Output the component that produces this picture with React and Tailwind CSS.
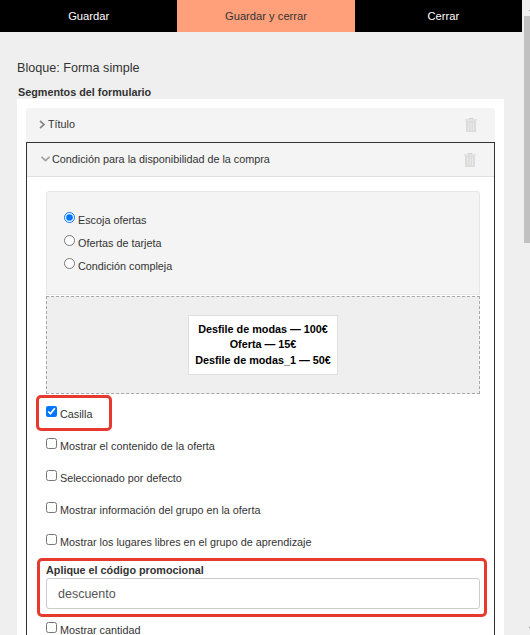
import React from "react";

const TrashIcon = () => (
    <svg viewBox="0 0 12 14" width="12" height="14" className="shrink-0" fill="none">
        <path d="M4 1.5V.5h4v1" stroke="#d2d2d2" />
        <path d="M0 2h12" stroke="#d2d2d2" />
        <path d="M1 3h10v10.5a.5.5 0 0 1-.5.5h-9a.5.5 0 0 1-.5-.5z" fill="#dcdcdc" />
        <path d="M3.5 4.5v8" stroke="#efe6dc" />
        <path d="M6 4.5v8" stroke="#e6efe6" />
        <path d="M8.5 4.5v8" stroke="#e6e8f2" />
    </svg>
);

const Chevron = ({ open }) =>
    open ? (
        <svg viewBox="0 0 9 6" width="9" height="6" fill="none" className="shrink-0">
            <path d="M0.5 0.8L4.5 4.6 8.5 0.8" stroke="#a0a0a0" strokeWidth="1.7" />
        </svg>
    ) : (
        <svg viewBox="0 0 8 9" width="8" height="9" fill="none" className="shrink-0">
            <path d="M1 0.8L5 4.5 1 8.2" stroke="#8a8a8a" strokeWidth="1.8" />
        </svg>
    );

const Check = ({ label, checked }) => (
    <label className="flex items-start h-[32px] text-[10.8px] leading-[14px] text-[#333]">
        <input type="checkbox" defaultChecked={checked} className="w-[11px] h-[11px] m-0 accent-[#0075ff]" />
        <span className="ml-[3px] mt-[1px]">{label}</span>
    </label>
);

const Radio = ({ label, checked }) => (
    <label className="flex items-start h-[23px] text-[10.8px] leading-[14px] text-[#333]">
        <input type="radio" name="cond" defaultChecked={checked} className="w-[11px] h-[11px] m-0 accent-[#0075ff]" />
        <span className="ml-[3px] mt-[1px]">{label}</span>
    </label>
);

const App = () => {
    return (
        <div className="flex h-[635px] w-[530px] overflow-hidden bg-[#efefef] font-['Liberation_Sans',Arial,sans-serif]">
            <div className="w-[524px] shrink-0 overflow-hidden">
                <div className="w-[522px] h-[32px] overflow-hidden">
                    <div className="flex w-[532px] h-[32px] text-[11.2px]">
                        <div className="flex-1 flex items-center justify-center bg-black text-white">Guardar</div>
                        <div className="flex-1 flex items-center justify-center bg-[#ffa07a] text-[#333]">Guardar y cerrar</div>
                        <div className="flex-1 flex items-center justify-center bg-black text-white">Cerrar</div>
                    </div>
                </div>

                <div className="pl-[17px] pr-[20px]">
                    <h1 className="mt-[28px] text-[12.6px] leading-[16px] font-normal text-[#333]">Bloque: Forma simple</h1>
                    <h2 className="mt-[9px] ml-[1px] text-[10.8px] leading-[14px] font-bold text-[#333]">Segmentos del formulario</h2>

                    <div className="bg-white px-[9px] pt-[9px] h-[600px]">
                        <div className="flex items-center justify-between h-[34px] bg-[#f4f4f4] rounded-t-[3px] pl-[13px] pr-[18px]">
                            <div className="flex items-center gap-[1px] pb-[2px] text-[10.8px] text-[#333]">
                                <Chevron />
                                <span>Título</span>
                            </div>
                            <TrashIcon />
                        </div>

                        <div className="border border-[#333] border-b-0">
                            <div className="flex items-center justify-between h-[34px] bg-[#f4f4f4] border-b border-[#e0e0e0] pl-[14px] pr-[18px]">
                                <div className="flex items-center gap-[2px] pb-[1px] text-[10.8px] text-[#333]">
                                    <Chevron open />
                                    <span>Condición para la disponibilidad de la compra</span>
                                </div>
                                <TrashIcon />
                            </div>

                            <div className="pl-[19px] pr-[14px] pt-[14px]">
                                <div className="h-[104px] bg-[#f4f4f4] border border-[#e6e6e6] rounded-t-[3px] pl-[17px] pt-[20px]">
                                    <Radio label="Escoja ofertas" checked />
                                    <Radio label="Ofertas de tarjeta" />
                                    <Radio label="Condición compleja" />
                                </div>
                                <div className="h-[98px] mt-[1px] bg-[#efefef] border border-dashed border-[#a8a8a8] flex items-center justify-center">
                                    <div className="w-[150px] h-[60px] bg-white border border-[#e0e0e0] flex flex-col items-center justify-center text-[10.8px] leading-[15.5px] font-bold text-black">
                                        <span>Desfile de modas — 100€</span>
                                        <span>Oferta — 15€</span>
                                        <span>Desfile de modas_1 — 50€</span>
                                    </div>
                                </div>

                                <div className="relative mt-[12px]">
                                    <div className="absolute left-[-10px] top-[-11px] w-[76px] h-[36px] border-[3px] border-[#e8392f] rounded-[5px]" />
                                    <Check label="Casilla" checked />
                                    <Check label="Mostrar el contenido de la oferta" />
                                    <Check label="Seleccionado por defecto" />
                                    <Check label="Mostrar información del grupo en la oferta" />
                                    <Check label="Mostrar los lugares libres en el grupo de aprendizaje" />
                                </div>

                                <div className="relative mt-[-3px]">
                                    <div className="absolute left-[-9px] top-[-5px] right-[-7px] h-[59px] border-[3px] border-[#e8392f] rounded-[5px]" />
                                    <label className="block text-[10.8px] leading-[14px] font-bold text-[#333]">Aplique el código promocional</label>
                                    <input
                                        type="text"
                                        defaultValue="descuento"
                                        className="block w-full h-[31px] mt-[1px] px-[11px] bg-white border border-[#ccc] rounded-[3px] text-[12.5px] text-[#555]"
                                    />
                                </div>

                                <div className="mt-[13px]">
                                    <Check label="Mostrar cantidad" />
                                </div>
                            </div>
                        </div>
                    </div>
                </div>
            </div>

            <div className="flex flex-col w-[6px] shrink-0 overflow-hidden">
                <div className="h-[16px] w-[17px] flex items-center justify-center">
                    <svg viewBox="0 0 8 5" width="8" height="5"><path d="M4 0l4 5H0z" fill="#505050" /></svg>
                </div>
                <div className="h-[227px] w-[17px] bg-[#c1c1c1]" />
                <div className="flex-1" />
                <div className="h-[17px] w-[17px] flex items-end justify-center pb-[3px]">
                    <svg viewBox="0 0 8 5" width="8" height="5"><path d="M4 5l4-5H0z" fill="#505050" /></svg>
                </div>
            </div>
        </div>
    );
};

export default App;
